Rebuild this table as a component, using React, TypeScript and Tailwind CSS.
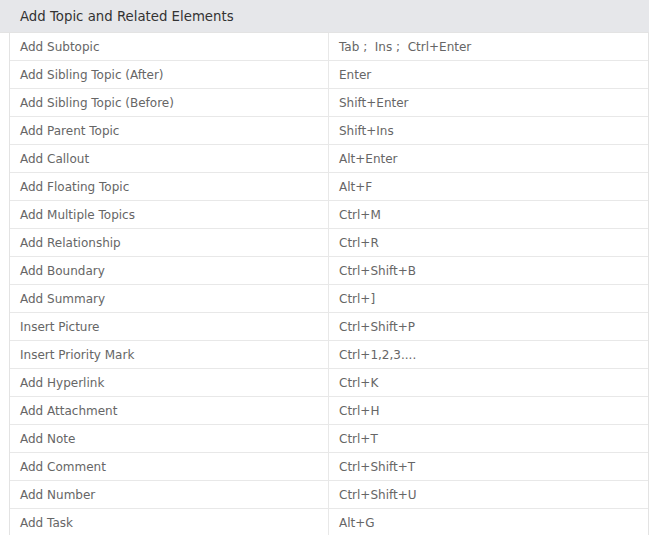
import React from 'react';

const rows: [string, string][] = [
  ['Add Subtopic', 'Tab ;  Ins ;  Ctrl+Enter'],
  ['Add Sibling Topic (After)', 'Enter'],
  ['Add Sibling Topic (Before)', 'Shift+Enter'],
  ['Add Parent Topic', 'Shift+Ins'],
  ['Add Callout', 'Alt+Enter'],
  ['Add Floating Topic', 'Alt+F'],
  ['Add Multiple Topics', 'Ctrl+M'],
  ['Add Relationship', 'Ctrl+R'],
  ['Add Boundary', 'Ctrl+Shift+B'],
  ['Add Summary', 'Ctrl+]'],
  ['Insert Picture', 'Ctrl+Shift+P'],
  ['Insert Priority Mark', 'Ctrl+1,2,3....'],
  ['Add Hyperlink', 'Ctrl+K'],
  ['Add Attachment', 'Ctrl+H'],
  ['Add Note', 'Ctrl+T'],
  ['Add Comment', 'Ctrl+Shift+T'],
  ['Add Number', 'Ctrl+Shift+U'],
  ['Add Task', 'Alt+G'],
];

export default function App() {
  return (
    <div className="w-[659px] h-[535px] overflow-hidden bg-white font-['DejaVu_Sans',sans-serif]">
      <div className="w-[649px] h-[33px] bg-[#e6e7ea] border-b border-[#e3e3e3] flex items-center pl-5 pt-[2px] text-[13.3px] text-[#333]">
        Add Topic and Related Elements
      </div>
      <div className="ml-[9px] w-[640px] border-l border-r border-[#e3e3e3] text-[12px]">
        {rows.map(([name, keys]) => (
          <div key={name} className="h-7 flex border-b border-[#e8e8e8] text-[#666]">
            <div className="w-[319px] border-r border-[#e8e8e8] flex items-center pl-[10px] whitespace-pre">{name}</div>
            <div className="flex-1 flex items-center pl-[10px] whitespace-pre">{keys}</div>
          </div>
        ))}
      </div>
    </div>
  );
}
